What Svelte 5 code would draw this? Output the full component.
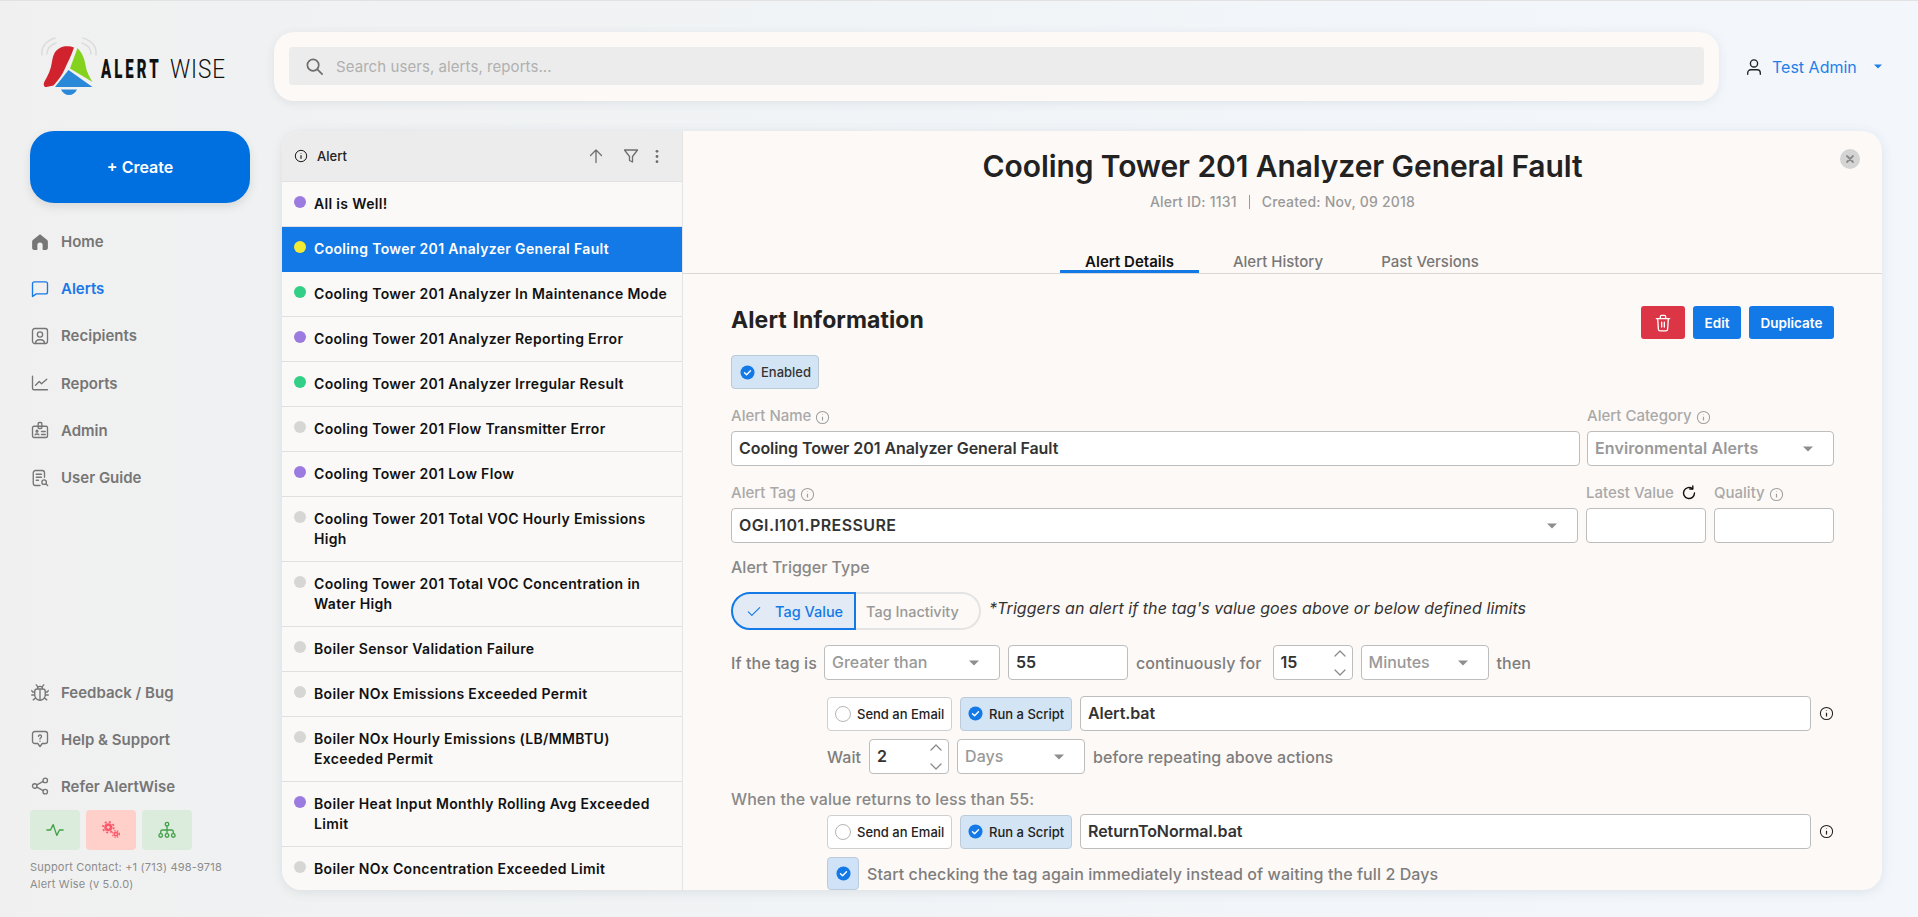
<script>
  const nav = [
    { label: 'Home', icon: 'home' },
    { label: 'Alerts', icon: 'chat', active: true },
    { label: 'Recipients', icon: 'person' },
    { label: 'Reports', icon: 'chart' },
    { label: 'Admin', icon: 'badge' },
    { label: 'User Guide', icon: 'guide' }
  ];
  const foot = [
    { label: 'Feedback / Bug', icon: 'bug' },
    { label: 'Help & Support', icon: 'help' },
    { label: 'Refer AlertWise', icon: 'share' }
  ];
  const P = '#9b7bdf', G = '#33cf87', Y = '#f2ea35', N = '#d6d6d4';
  const alerts = [
    ['All is Well!', P],
    ['Cooling Tower 201 Analyzer General Fault', Y, true],
    ['Cooling Tower 201 Analyzer In Maintenance Mode', G],
    ['Cooling Tower 201 Analyzer Reporting Error', P],
    ['Cooling Tower 201 Analyzer Irregular Result', G],
    ['Cooling Tower 201 Flow Transmitter Error', N],
    ['Cooling Tower 201 Low Flow', P],
    ['Cooling Tower 201 Total VOC Hourly Emissions High', N],
    ['Cooling Tower 201 Total VOC Concentration in Water High', N],
    ['Boiler Sensor Validation Failure', N],
    ['Boiler NOx Emissions Exceeded Permit', N],
    ['Boiler NOx Hourly Emissions (LB/MMBTU) Exceeded Permit', N],
    ['Boiler Heat Input Monthly Rolling Avg Exceeded Limit', P],
    ['Boiler NOx Concentration Exceeded Limit', N]
  ];
</script>

{#snippet icon(name)}
  <svg class="nav-ic" viewBox="0 0 24 24" fill="none" stroke="currentColor" stroke-width="1.8" stroke-linecap="round" stroke-linejoin="round">
    {#if name === 'home'}
      <path fill="currentColor" stroke="none" d="M12 1.500 2.800 9c-.8.6-1.300 1.500-1.300 2.500V20c0 1.400 1.100 2.500 2.500 2.500h4.500V16a3.500 3.500 0 0 1 7 0v6.500H20c1.400 0 2.500-1.100 2.500-2.500v-8.500c0-1-.5-1.900-1.300-2.500z"/>
    {:else if name === 'chat'}
      <path d="M2 5a2.500 2.500 0 0 1 2.500-2.500h15A2.500 2.500 0 0 1 22 5v11a2.500 2.500 0 0 1-2.500 2.500H7L2 22z"/>
    {:else if name === 'person'}
      <rect x="2" y="2" width="20" height="20" rx="3"/><circle cx="12" cy="10" r="3.500"/><path d="M6 22v-1a5 5 0 0 1 5-4h2a5 5 0 0 1 5 4v1"/>
    {:else if name === 'chart'}
      <path d="M2 3v16a2 2 0 0 0 2 2h18"/><path d="m6 15 5-5 3 3 7-6"/>
    {:else if name === 'badge'}
      <rect x="2" y="7" width="20" height="15" rx="2"/><rect x="9.500" y="2" width="5" height="8" rx="1.500"/><circle cx="8" cy="13.500" r="1.200"/><path d="M5.500 18.500c.5-1.500 4.500-1.500 5 0M14 14h5M14 18h5"/>
    {:else if name === 'guide'}
      <path d="M12 22H6a3 3 0 0 1-3-3V5a3 3 0 0 1 3-3h9a3 3 0 0 1 3 3v6"/><path d="M7 7h7M7 11h7M7 15h3"/><circle cx="17.500" cy="17.500" r="3"/><path d="m20 20 2.200 2"/>
    {:else if name === 'bug'}
      <path d="M8 8h8a3 3 0 0 1 3 3v5a7 7 0 0 1-14 0v-5a3 3 0 0 1 3-3zM8.500 8a3.500 3.500 0 0 1 7 0M12 9v13M9 5 7 2.500M15 5l2-2.500M5 12H2l-1-2M19 12h3l1-2M5 16H1M19 16h4M6 20l-3 2.500M18 20l3 2.500"/>
    {:else if name === 'help'}
      <path d="M5 2h14a3 3 0 0 1 3 3v10a3 3 0 0 1-3 3h-4l-3 4-3-4H5a3 3 0 0 1-3-3V5a3 3 0 0 1 3-3z"/><path d="M10 8.500a2 2 0 1 1 3 1.800c-.7.4-1 .8-1 1.700M12 15v.1"/>
    {:else if name === 'share'}
      <circle cx="5" cy="12" r="3"/><circle cx="19" cy="4.500" r="3"/><circle cx="19" cy="19.500" r="3"/><path d="m7.800 10.600 8.500-4.700M7.800 13.400l8.500 4.700"/>
    {/if}
  </svg>
{/snippet}

{#snippet info(cls)}
  <svg class={cls} viewBox="0 0 16 16" fill="none" stroke="currentColor" stroke-width="1.100"><circle cx="8" cy="8" r="6.500"/><path d="M8 7.200v4M8 4.800v.6" stroke-width="1.300"/></svg>
{/snippet}

{#snippet caret()}
  <svg class="caret" viewBox="0 0 10 6"><path d="M0 .5h10L5 5.500z" fill="currentColor"/></svg>
{/snippet}

{#snippet check()}
  <svg class="check" viewBox="0 0 16 16"><circle cx="8" cy="8" r="7.500" fill="#1379e6"/><path d="m4.800 8.200 2.200 2.200 4.200-4.300" fill="none" stroke="#fff" stroke-width="1.500" stroke-linecap="round" stroke-linejoin="round"/></svg>
{/snippet}

{#snippet spinner(v)}
  <div class="box spin">
    <span>{v}</span>
    <svg viewBox="0 0 12 28" fill="none" stroke="#8a8a8a" stroke-width="1.300" stroke-linecap="round" stroke-linejoin="round"><path d="m1 7 5-5 5 5M1 21l5 5 5-5"/></svg>
  </div>
{/snippet}

{#snippet actions(name)}
  <div class="pill"><span class="radio"></span>Send an Email</div>
  <div class="pill on">{@render check()}Run a Script</div>
  <div class="box bold grow">{name}</div>
  {@render info('row-info')}
{/snippet}

<div class="app">
  <aside class="side">
    <div class="logo">
      <svg width="196" height="62" viewBox="40 35 196 62">
        <g fill="none" stroke="#dcdcdc" stroke-width="1.500" stroke-linecap="round">
          <path d="M42 55c-1-7 3-14 13-17"/><path d="M47 54c0-6 3-9 9-11"/>
          <path d="M96 55c1-7-3-14-13-17"/><path d="M91 54c0-6-3-9-9-11"/>
        </g>
        <path fill="#d1232d" d="M74 47.500c-4-1.500-11-2-15 1-5 3-6 8-7 13-1 8-4 14-7.500 20-1.500 3-.5 6 2 5.500l7-1.500c5-6 9-11 11-16 3-7 7-14 9.500-22z"/>
        <path fill="#84d21e" d="M77.500 48 70 68.500 92.500 82c-3-5-6-10-7-17-1-6-3-12-8-17z"/>
        <path fill="#2a88d8" d="M68.500 70 55 87h37.500z"/>
        <path fill="#2a88d8" d="M61 89.500h16c-1.500 3.500-4.500 5.500-8 5.500s-6.500-2-8-5.500z"/>
        <text transform="translate(101 78) scale(.6 1)" class="l1">ALERT</text>
        <text transform="translate(170 78) scale(.9 1)" class="l2">WISE</text>
      </svg>
    </div>
    <button class="create">+ Create</button>
    <nav class="nav">
      {#each nav as n}
        <div class="nav-item" class:active={n.active}>{@render icon(n.icon)}<span>{n.label}</span></div>
      {/each}
    </nav>
    <div class="nav foot">
      {#each foot as n}
        <div class="nav-item">{@render icon(n.icon)}<span>{n.label}</span></div>
      {/each}
    </div>
    <div class="status">
      <div class="st green"><svg viewBox="0 0 20 20" fill="none" stroke="currentColor" stroke-width="1.500" stroke-linecap="round" stroke-linejoin="round"><path d="M1 10h4l3-6 4 12 3-6h4"/></svg></div>
      <div class="st red"><svg viewBox="0 0 20 20" fill="currentColor"><circle cx="7" cy="7" r="4.500"/><circle cx="7" cy="7" r="6" fill="none" stroke="currentColor" stroke-width="2" stroke-dasharray="2.200 2.500"/><circle cx="7" cy="7" r="1.500" fill="#ffd0ca"/><circle cx="15.500" cy="14.500" r="2.800"/><circle cx="15.500" cy="14.500" r="3.800" fill="none" stroke="currentColor" stroke-width="1.400" stroke-dasharray="1.500 1.600"/><circle cx="15.500" cy="14.500" r="1" fill="#ffd0ca"/></svg></div>
      <div class="st green"><svg viewBox="0 0 20 20" fill="none" stroke="currentColor" stroke-width="1.500"><circle cx="10" cy="3.500" r="2"/><circle cx="3" cy="16" r="2"/><circle cx="10" cy="16" r="2"/><circle cx="17" cy="16" r="2"/><path d="M10 5.500V14M3 14v-2a2 2 0 0 1 2-2h10a2 2 0 0 1 2 2v2"/></svg></div>
    </div>
    <div class="support">Support Contact: +1 (713) 498-9718<br />Alert Wise (v 5.0.0)</div>
  </aside>

  <div class="main">
    <header class="top">
      <div class="search-card">
        <div class="search">
          <svg viewBox="0 0 20 20" fill="none" stroke="#6e6e6e" stroke-width="1.800" stroke-linecap="round"><circle cx="8.500" cy="8.500" r="6"/><path d="m13 13 5 5"/></svg>
          <span>Search users, alerts, reports...</span>
        </div>
      </div>
      <div class="user">
        <svg viewBox="0 0 20 20" fill="none" stroke="#222" stroke-width="1.500" stroke-linecap="round"><circle cx="10" cy="6" r="4"/><path d="M3 18v-1.500A3.500 3.500 0 0 1 6.500 13h7a3.500 3.500 0 0 1 3.500 3.500V18"/></svg>
        <span>Test Admin</span>
        <svg class="ucaret" viewBox="0 0 10 6"><path d="M0 .5h10L5 5.500z" fill="currentColor"/></svg>
      </div>
    </header>

    <section class="panel">
      <div class="list">
        <div class="list-head">
          {@render info('lh-info')}
          <span class="lh-title">Alert</span>
          <svg class="lh-ic up" viewBox="0 0 16 16" fill="none" stroke="currentColor" stroke-width="1.300" stroke-linecap="round" stroke-linejoin="round"><path d="M8 14.500V2M2.500 7.500 8 2l5.500 5.500"/></svg>
          <svg class="lh-ic fil" viewBox="0 0 16 16" fill="none" stroke="currentColor" stroke-width="1.300" stroke-linejoin="round"><path d="M1.500 2h13L9.500 8.500V14l-3-1.500v-4z"/></svg>
          <svg class="lh-ic dots" viewBox="0 0 4 16" fill="currentColor"><circle cx="2" cy="2.500" r="1.500"/><circle cx="2" cy="8" r="1.500"/><circle cx="2" cy="13.500" r="1.500"/></svg>
        </div>
        {#each alerts as a}
          <div class="row" class:sel={a[2]}>
            <span class="dot" style="background:{a[1]}"></span>
            <span class="row-t">{a[0]}</span>
          </div>
        {/each}
      </div>

      <div class="detail">
        <div class="d-head">
          <h1>Cooling Tower 201 Analyzer General Fault</h1>
          <div class="meta"><span>Alert ID: 1131</span><i></i><span>Created: Nov, 09 2018</span></div>
          <div class="close"><svg viewBox="0 0 10 10" stroke="#8a8a8a" stroke-width="1.800" stroke-linecap="round"><path d="m2 2 6 6M8 2 2 8"/></svg></div>
          <div class="tabs">
            <div class="tab cur">Alert Details</div>
            <div class="tab t2">Alert History</div>
            <div class="tab t3">Past Versions</div>
          </div>
        </div>

        <div class="form">
          <div class="title-row">
            <h2>Alert Information</h2>
            <div class="btns">
              <button class="btn del" aria-label="Delete"><svg viewBox="0 0 18 20" fill="none" stroke="#fff" stroke-width="1.500" stroke-linecap="round" stroke-linejoin="round"><path d="M1.500 5h15M3 5l.8 12a2 2 0 0 0 2 1.800h6.400a2 2 0 0 0 2-1.800L15 5M6 5V3a1.500 1.500 0 0 1 1.500-1.500h3A1.500 1.500 0 0 1 12 3v2M7.500 9v5.500M10.500 9v5.500"/></svg></button>
              <button class="btn edit">Edit</button>
              <button class="btn dup">Duplicate</button>
            </div>
          </div>
          <div class="enabled">{@render check()}Enabled</div>

          <div class="grid g1">
            <div class="f"><div class="lab">Alert Name {@render info('lab-info')}</div><div class="box bold">Cooling Tower 201 Analyzer General Fault</div></div>
            <div class="f"><div class="lab">Alert Category {@render info('lab-info')}</div><div class="box sel-box env"><span>Environmental Alerts</span>{@render caret()}</div></div>
          </div>
          <div class="grid g2">
            <div class="f"><div class="lab">Alert Tag {@render info('lab-info')}</div><div class="box bold tag"><span>OGI.I101.PRESSURE</span>{@render caret()}</div></div>
            <div class="f"><div class="lab">Latest Value <svg class="refresh" viewBox="0 0 16 16" fill="none" stroke="#111" stroke-width="1.400" stroke-linecap="round" stroke-linejoin="round"><path d="M13.500 8A5.500 5.500 0 1 1 11.500 3.800"/><path d="M11.800 1v3h-3"/></svg></div><div class="box"></div></div>
            <div class="f"><div class="lab">Quality {@render info('lab-info')}</div><div class="box"></div></div>
          </div>

          <div class="lab2">Alert Trigger Type</div>
          <div class="trigger">
            <div class="toggle">
              <div class="tg on"><svg viewBox="0 0 16 12" fill="none" stroke="currentColor" stroke-width="1.300" stroke-linecap="round" stroke-linejoin="round"><path d="m1.500 6.500 4 4L14.500 1.500"/></svg>Tag Value</div>
              <div class="tg off">Tag Inactivity</div>
            </div>
            <em>*Triggers an alert if the tag's value goes above or below defined limits</em>
          </div>

          <div class="line cond">
            <span class="tx">If the tag is</span>
            <div class="box sel-box w176"><span>Greater than</span>{@render caret()}</div>
            <div class="box bold w120">55</div>
            <span class="tx">continuously for</span>
            <div class="w80">{@render spinner('15')}</div>
            <div class="box sel-box w128"><span>Minutes</span>{@render caret()}</div>
            <span class="tx">then</span>
          </div>

          <div class="line act">{@render actions('Alert.bat')}</div>
          <div class="line wait">
            <span class="tx">Wait</span>
            <div class="w80">{@render spinner('2')}</div>
            <div class="box sel-box w128"><span>Days</span>{@render caret()}</div>
            <span class="tx">before repeating above actions</span>
          </div>

          <div class="lab2 when">When the value returns to less than 55:</div>
          <div class="line act a2">{@render actions('ReturnToNormal.bat')}</div>
          <div class="line restart">
            <div class="cb">{@render check()}</div>
            <span class="tx">Start checking the tag again immediately instead of waiting the full 2 Days</span>
          </div>
        </div>
      </div>
    </section>
  </div>
</div>

<style>
  :global(body) { margin: 0; font-family: Inter, "Noto Sans", sans-serif; background: #f1f4f7; }
  .app { display: flex; height: 916px; overflow: hidden; border-top: 1px solid #e2e2e2; background: linear-gradient(90deg, #f0f0f0 0%, #f0f2f3 20%, #f2f6fa 75%, #f3f7fc 100%); }
  .side { width: 274px; flex: none; box-sizing: border-box; padding-left: 30px; display: flex; flex-direction: column; }
  .logo { height: 62px; margin: 34px 0 0 10px; }
  .logo svg { display: block; }
  .l1 { font: 900 25px Roboto, sans-serif; fill: #111; letter-spacing: 5px; }
  .l2 { font: 300 25px Roboto, sans-serif; fill: #111; letter-spacing: 1px; }
  .create { width: 220px; height: 72px; margin-top: 34px; border: 0; border-radius: 24px; background: #0070e0; color: #fff; font: 600 16px Inter, sans-serif; box-shadow: 0 4px 10px rgba(0,0,0,.1); }
  .nav { display: flex; flex-direction: column; margin-top: 15px; }
  .nav-item { height: 47.2px; display: flex; align-items: center; gap: 12px; color: #767676; font-size: 15px; font-weight: 600; }
  .nav-item.active { color: #1878e8; }
  .nav-ic { width: 18px; height: 18px; flex: none; margin-left: 1px; }
  .foot { margin-top: auto; }
  .status { display: flex; gap: 6px; margin-top: 0; }
  .st { width: 50px; height: 40px; border-radius: 4px; display: flex; align-items: center; justify-content: center; }
  .st svg { width: 18px; height: 18px; }
  .st.green { background: #dbebdc; color: #43a047; }
  .st.red { background: #ffd0ca; color: #fb5a6c; }
  .support { font-size: 11px; line-height: 17px; color: #8c8c8c; margin: 9px 0 24px; letter-spacing: .2px; }

  .main { flex: 1; min-width: 0; display: flex; flex-direction: column; }
  .top { display: flex; align-items: center; margin-top: 31px; height: 69px; }
  .search-card { width: 1445px; height: 69px; box-sizing: border-box; padding: 15px; background: #fdf9f6; border-radius: 20px; box-shadow: 0 2px 10px rgba(60,80,110,.1); flex: none; }
  .search { height: 38px; background: #ececec; border-radius: 4px; display: flex; align-items: center; padding-left: 16px; gap: 12px; color: #b0b0b0; font-size: 15px; letter-spacing: .07px; }
  .search svg { width: 19px; height: 19px; }
  .user { display: flex; align-items: center; margin-left: 26px; color: #1f7fe8; font-size: 16px; }
  .user > svg:first-child { width: 18px; height: 18px; margin-right: 9px; }
  .ucaret { width: 8px; height: 5px; margin-left: 17px; }

  .panel { width: 1600px; height: 759px; margin: 30px 0 0 8px; flex: none; display: flex; border-radius: 20px; overflow: hidden; background: #fdf9f6; box-shadow: 0 2px 12px rgba(60,80,110,.12); }
  .list { width: 400px; flex: none; background: #faf9f7; border-right: 1px solid #e4e4e4; overflow: hidden; }
  .list-head { height: 50px; background: #ececec; border-bottom: 1px solid #e2e2e2; display: flex; align-items: center; color: #222; }
  .lh-info { width: 14px; height: 14px; margin-left: 12px; color: #111; }
  .lh-title { margin-left: 9px; font-size: 13px; font-weight: 500; flex: 1; }
  .lh-ic { color: #6e6e6e; }
  .up { width: 16px; height: 16px; margin-right: 19px; }
  .fil { width: 16px; height: 16px; margin-right: 16px; }
  .dots { width: 4px; height: 15px; margin-right: 23px; }
  .row { box-sizing: border-box; min-height: 45px; padding: 12px 10px 12px 0; border-bottom: 1px solid #e0e0e0; display: flex; align-items: flex-start; color: #111; font-size: 14px; font-weight: 600; line-height: 20px; letter-spacing: .33px; }
  .row.sel { background: #1379e6; color: #fff; border-bottom-color: #1379e6; }
  .dot { width: 12px; height: 12px; border-radius: 50%; margin: 2px 8px 0 12px; flex: none; }
  .row-t { flex: 1; }

  .detail { flex: 1; min-width: 0; overflow: hidden; }
  .d-head { position: relative; height: 142px; border-bottom: 1px solid #d8d8d8; text-align: center; }
  h1 { margin: 0; padding-top: 16px; font-size: 30px; line-height: 38px; font-weight: 600; color: #222; letter-spacing: -.1px; }
  .meta { margin-top: 8px; display: flex; justify-content: center; align-items: center; gap: 12px; font-size: 14px; color: #9a9a9a; font-weight: 500; letter-spacing: .2px; }
  .meta i { width: 1px; height: 14px; background: #9a9a9a; }
  .close { position: absolute; right: 22px; top: 18px; width: 20px; height: 20px; border-radius: 50%; background: #d4d4d4; display: flex; align-items: center; justify-content: center; }
  .close svg { width: 10px; height: 10px; }
  .tabs { position: absolute; left: 377px; bottom: 0; display: flex; font-size: 15px; font-weight: 500; color: #777; }
  .tab { height: 29px; line-height: 16px; padding-top: 10px; text-align: center; box-sizing: border-box; white-space: nowrap; }
  .tab.cur { width: 139px; color: #111; font-weight: 600; border-bottom: 3px solid #1379e6; }
  .t2 { width: 92px; margin-left: 33px; }
  .t3 { width: 98px; margin-left: 57px; }

  .form { padding: 0 48px; }
  .title-row { display: flex; justify-content: space-between; align-items: flex-start; padding-top: 32px; height: 49px; }
  h2 { margin: 0; font-size: 23px; line-height: 28px; font-weight: 700; color: #222; letter-spacing: .1px; }
  .btns { display: flex; gap: 8px; }
  .btn { height: 33px; border: 0; border-radius: 3px; background: #1379e6; color: #fff; font: 600 13.500px Inter, sans-serif; padding: 0; display: flex; align-items: center; justify-content: center; }
  .del { width: 44px; background: #dc3545; }
  .del svg { width: 16px; height: 18px; }
  .edit { width: 48px; }
  .dup { width: 85px; }
  .enabled { width: 88px; height: 34px; box-sizing: border-box; background: #d3e4f5; border: 1px solid #b9c9d8; border-radius: 4px; display: flex; align-items: center; gap: 6px; padding-left: 8px; font-size: 13px; font-weight: 500; color: #333; }
  .check { width: 15px; height: 15px; flex: none; }

  .grid { display: grid; }
  .g1 { grid-template-columns: 849px 247px; gap: 7px; margin-top: 18px; }
  .g2 { grid-template-columns: 847px 120px 120px; gap: 8px; margin-top: 18px; }
  .lab { height: 24px; display: flex; align-items: flex-start; gap: 4px; font-size: 15px; line-height: 18px; font-weight: 500; color: #a9a9a9; }
  .lab-info { width: 15px; height: 15px; margin-top: 3px; color: #a0a0a0; }
  .refresh { width: 16px; height: 16px; margin: 1px 0 0 3px; }
  .box { box-sizing: border-box; height: 35px; background: #fff; border: 1px solid #bdbdbd; border-radius: 4px; padding: 0 7px 2px; display: flex; align-items: center; font-size: 16px; color: #999; font-weight: 500; }
  .bold { color: #333; font-weight: 600; letter-spacing: -.07px; }
  .sel-box { justify-content: space-between; padding-right: 0; }
  .sel-box .caret { margin-right: 20px; }
  .tag { justify-content: space-between; letter-spacing: .4px; }
  .tag .caret { margin-right: 13px; }
  .env { font-weight: 600; letter-spacing: .1px; }
  .caret { width: 10px; height: 6px; color: #8e8e8e; flex: none; margin-top: 2px; }
  .lab2 { font-size: 16px; line-height: 18px; font-weight: 500; color: #888; margin-top: 15px; }
  .trigger { display: flex; align-items: center; margin-top: 16px; gap: 8px; }
  .toggle { display: flex; width: 250px; height: 38px; font-size: 14.500px; font-weight: 500; flex: none; }
  .tg { box-sizing: border-box; display: flex; align-items: center; }
  .tg.on { width: 125px; background: #e2ebf5; border: 2px solid #1379e6; border-radius: 19px 0 0 19px; color: #1379e6; padding-left: 14px; gap: 14px; }
  .tg.on svg { width: 14px; height: 11px; }
  .tg.off { flex: 1; border: 2px solid #e4e4e4; border-left: 0; border-radius: 0 19px 19px 0; color: #999; padding-left: 10px; }
  em { font-size: 16px; color: #333; margin-top: -6px; white-space: nowrap; letter-spacing: .06px; }
  .line { display: flex; align-items: center; }
  .tx { font-size: 16px; color: #7d7d7d; font-weight: 500; white-space: nowrap; letter-spacing: .08px; }
  .cond { margin-top: 15px; height: 35px; }
  .cond .tx:first-child { width: 93px; flex: none; }
  .w176 { width: 176px; flex: none; }
  .w120 { width: 120px; margin-left: 8px; margin-right: 8px; flex: none; }
  .w80 { width: 80px; margin: 0 8px 0 8px; flex: none; }
  .cond .w80 { margin-left: 11px; }
  .w128 { width: 128px; flex: none; }
  .cond .w128 + .tx, .wait .w128 + .tx { margin-left: 8px; }
  .spin { justify-content: space-between; color: #333; font-weight: 600; padding-right: 6px; }
  .spin svg { width: 12px; height: 28px; margin-top: 2px; }
  .act { margin-top: 16px; height: 35px; padding-left: 96px; }
  .pill { box-sizing: border-box; height: 34px; width: 125px; background: #fff; border: 1px solid #cfcfcf; border-radius: 4px; display: flex; align-items: center; gap: 6px; padding-left: 7px; font-size: 13px; font-weight: 500; color: #222; white-space: nowrap; flex: none; }
  .pill.on { width: 112px; margin-left: 8px; background: #d3e4f5; border-color: #bccbda; padding-left: 7px; }
  .radio { width: 14px; height: 14px; border: 1px solid #b5b5b5; border-radius: 50%; background: #fff; flex: none; }
  .grow { width: 731px; margin-left: 8px; flex: none; }
  .row-info { width: 15px; height: 15px; margin-left: 8px; color: #222; flex: none; }
  .wait { margin-top: 8px; height: 35px; padding-left: 96px; }
  .when { margin-top: 16px; letter-spacing: .1px; }
  .a2 { margin-top: 6px; }
  .restart { margin-top: 8px; padding-left: 96px; gap: 8px; }
  .cb { width: 32px; height: 33px; box-sizing: border-box; background: #cfe2f7; border: 1px solid #bccbda; border-radius: 4px; display: flex; align-items: center; justify-content: center; flex: none; }
</style>
